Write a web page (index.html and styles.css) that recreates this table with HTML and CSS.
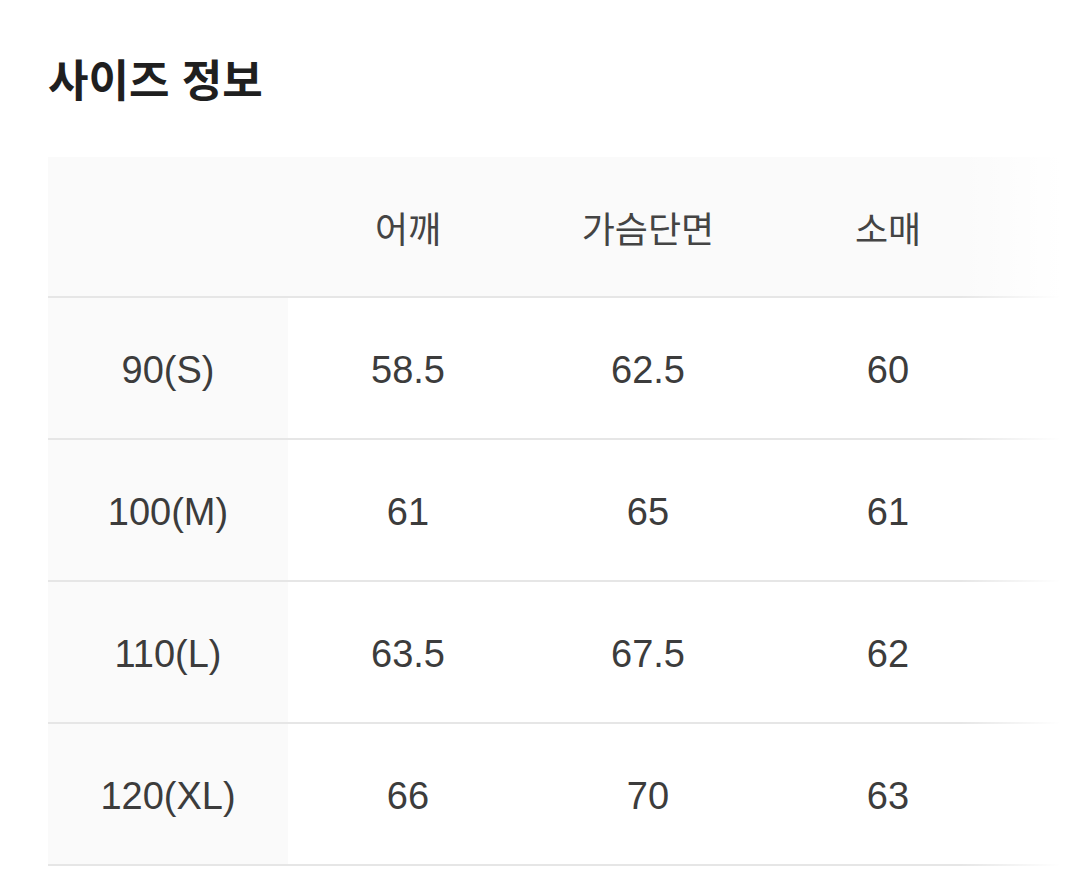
FILE: index.html
```html
<!DOCTYPE html>
<html lang="ko">
<head>
<meta charset="utf-8">
<link rel="stylesheet" href="styles.css">
</head>
<body>
<div class="page">
  <h1 class="title">사이즈 정보</h1>
  <div class="table-wrap">
    <table class="size-table">
      <thead>
        <tr>
          <th class="corner"></th>
          <th>어깨</th>
          <th>가슴단면</th>
          <th>소매</th>
          <th class="extra"></th>
        </tr>
      </thead>
      <tbody>
        <tr><th>90(S)</th><td>58.5</td><td>62.5</td><td>60</td><td class="extra"></td></tr>
        <tr><th>100(M)</th><td>61</td><td>65</td><td>61</td><td class="extra"></td></tr>
        <tr><th>110(L)</th><td>63.5</td><td>67.5</td><td>62</td><td class="extra"></td></tr>
        <tr><th>120(XL)</th><td>66</td><td>70</td><td>63</td><td class="extra"></td></tr>
      </tbody>
    </table>
    <div class="fade"></div>
  </div>
</div>
</body>
</html>
```

FILE: styles.css
```css
html, body {
  margin: 0;
  padding: 0;
  background: #ffffff;
}
body {
  font-family: "Noto Sans CJK KR", "Noto Sans", sans-serif;
  color: #333333;
}
.page {
  padding: 48px 0 0 48px;
  overflow: hidden;
  height: 887px;
  box-sizing: border-box;
}
.title {
  margin: 0;
  font-size: 44px;
  font-weight: 700;
  line-height: 60px;
  color: #1f1f1f;
  letter-spacing: 0;
}
.table-wrap {
  position: relative;
  margin-top: 49px;
  width: 1012px;
}
.size-table {
  border-collapse: collapse;
  table-layout: fixed;
  width: 1012px;
}
.size-table th,
.size-table td {
  width: 240px;
  text-align: center;
  font-family: "Liberation Sans", "Noto Sans CJK KR", sans-serif;
  font-weight: 400;
  font-size: 38px;
  color: #3c3c3c;
  padding: 5px 0 0;
  border-bottom: 2px solid #e6e6e6;
}
.size-table th.extra,
.size-table td.extra {
  width: 52px;
}
.size-table thead th {
  height: 139px;
  padding: 0;
  background: #fafafa;
  font-family: "Noto Sans CJK KR", sans-serif;
  font-size: 36px;
  color: #444444;
}
.size-table tbody th {
  background: #fafafa;
}
.size-table tbody tr {
  height: 142px;
}
.fade {
  position: absolute;
  top: 0;
  right: 0;
  bottom: 0;
  width: 100px;
  background: linear-gradient(to right, rgba(255,255,255,0), #ffffff);
  pointer-events: none;
}
```
